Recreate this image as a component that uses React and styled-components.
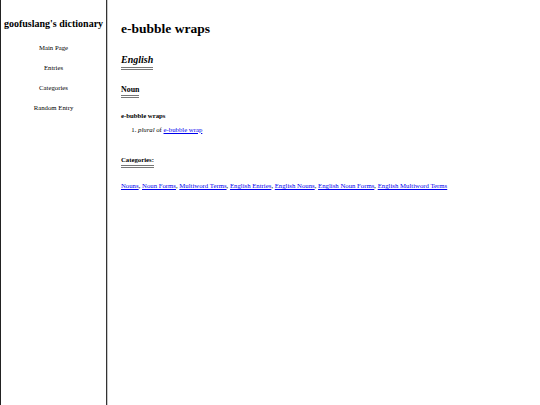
import React from 'react';
import styled, { createGlobalStyle } from 'styled-components';

const GlobalStyle = createGlobalStyle`
  html, body {
    margin: 0;
    padding: 0;
    background: #fff;
    font-family: "Liberation Serif", "Times New Roman", serif;
    color: #000;
    line-height: 1.15;
  }
`;

const Page = styled.div`
  display: flex;
  min-height: 100vh;
`;

const Sidebar = styled.nav`
  box-sizing: border-box;
  width: 107px;
  flex-shrink: 0;
  border-left: 1px solid #222;
  border-right: 1px solid #333;
  box-shadow: 1px 0 0 #c8c8c8;
  display: flex;
  flex-direction: column;
  align-items: center;
  padding-top: 18.25px;
`;

const SiteTitle = styled.div`
  font-size: 10px;
  font-weight: bold;
  white-space: nowrap;
  margin-bottom: 7.85px;
`;

const NavLink = styled.a`
  font-size: 6.75px;
  color: #000;
  text-decoration: none;
  line-height: 20.2px;
`;

const Main = styled.main`
  flex: 1;
  padding: 21.25px 14px;
`;

const Title = styled.h1`
  font-size: 13.5px;
  margin: 0 0 17.5px;
`;

const Heading = styled.h2`
  display: inline-block;
  font-size: ${p => p.$size}px;
  font-style: ${p => (p.$italic ? 'italic' : 'normal')};
  margin: 0;
  padding-bottom: ${p => p.$pad}px;
  border-bottom: 3px double #777;
`;

const Section = styled.section`
  line-height: 0;
  margin-bottom: ${p => p.$gap}px;

  h2 {
    line-height: 1.15;
  }
`;

const Headword = styled.div`
  font-size: 6.75px;
  font-weight: bold;
  margin-bottom: 6.2px;
`;

const Senses = styled.ol`
  font-size: 6.75px;
  margin: 0 0 22.9px;
  padding-left: 17px;
`;

const Link = styled.a`
  color: #0000ee;
  text-decoration: underline;
`;

const CatList = styled.p`
  font-size: 6.75px;
  margin: 0;
`;

const categories = [
  'Nouns',
  'Noun Forms',
  'Multiword Terms',
  'English Entries',
  'English Nouns',
  'English Noun Forms',
  'English Multiword Terms',
];

export default function App() {
  return (
    <Page>
      <GlobalStyle />
      <Sidebar>
        <SiteTitle>goofuslang's dictionary</SiteTitle>
        <NavLink href="#">Main Page</NavLink>
        <NavLink href="#">Entries</NavLink>
        <NavLink href="#">Categories</NavLink>
        <NavLink href="#">Random Entry</NavLink>
      </Sidebar>
      <Main>
        <Title>e-bubble wraps</Title>
        <Section $gap={15.25}>
          <Heading $size={10} $pad={1} $italic>English</Heading>
        </Section>
        <Section $gap={13.6}>
          <Heading $size={7.9} $pad={1}>Noun</Heading>
        </Section>
        <Headword>e-bubble wraps</Headword>
        <Senses>
          <li>
            <i>plural</i> of <Link href="#">e-bubble wrap</Link>
          </li>
        </Senses>
        <Section $gap={14.6}>
          <Heading $size={6.75} $pad={0.6}>Categories:</Heading>
        </Section>
        <CatList>
          {categories.map((c, i) => (
            <React.Fragment key={c}>
              <Link href="#">{c}</Link>
              {i < categories.length - 1 ? ', ' : ''}
            </React.Fragment>
          ))}
        </CatList>
      </Main>
    </Page>
  );
}
